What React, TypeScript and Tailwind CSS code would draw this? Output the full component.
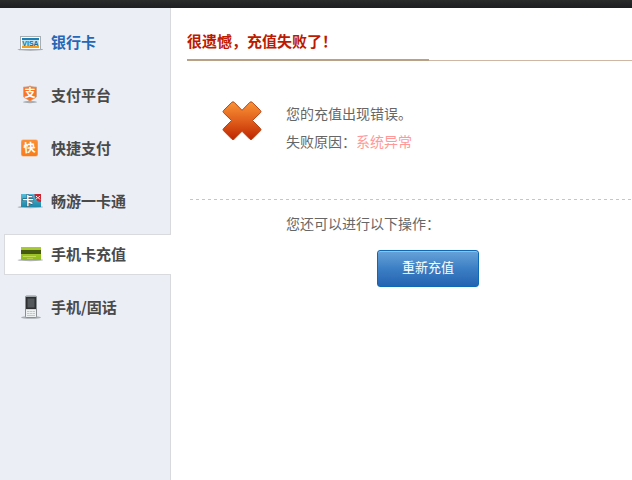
import clsx from "clsx";
import type { ReactNode } from "react";

const IconFrame = ({ children }: { children: ReactNode }) => (
  <svg
    className="shrink-0"
    width="26"
    height="29"
    viewBox="0 0 26 29"
    aria-hidden="true"
  >
    {children}
  </svg>
);

const BankCardIcon = () => (
  <IconFrame>
    <ellipse cx="13.5" cy="21.5" rx="13" ry="1.2" fill="#8b9299" opacity=".75" />
    <rect x="3.5" y="8.5" width="20" height="13" fill="#fff" stroke="#a8adb3" />
    <rect x="5" y="10" width="17" height="2" fill="#1f7fb0" />
    <rect x="5" y="12" width="17" height="6" fill="#c5e4f2" />
    <text
      x="13.5"
      y="17.8"
      textAnchor="middle"
      fontFamily="Liberation Sans, sans-serif"
      fontSize="7"
      fontWeight="bold"
      fill="#14709f"
    >
      VISA
    </text>
    <rect x="5" y="18" width="17" height="2" fill="#f5a01d" />
  </IconFrame>
);

const PlatformIcon = () => (
  <IconFrame>
    <ellipse cx="13" cy="21" rx="7" ry="1.2" fill="#8b9299" opacity=".7" />
    <path
      d="M6.5 6C9 6.2 11 5.8 13 5C15 5.8 17 6.2 19.5 6V15.5C19.500 17 15.500 17.500 13 20.500C10.500 17.500 6.500 17 6.500 15.500Z"
      fill="#fb7422"
      stroke="#c0a99c"
      strokeWidth=".8"
    />
    <text
      x="13"
      y="15.5"
      textAnchor="middle"
      fontFamily="Noto Sans CJK SC, sans-serif"
      fontSize="11"
      fontWeight="bold"
      fill="#fff"
    >
      支
    </text>
  </IconFrame>
);

const QuickPayIcon = () => (
  <IconFrame>
    <defs>
      <linearGradient id="quick" x1="0" y1="0" x2="0" y2="1">
        <stop offset="0" stopColor="#fb8f35" />
        <stop offset="1" stopColor="#f97b1a" />
      </linearGradient>
    </defs>
    <rect x="4" y="5.5" width="17" height="17" rx="2" fill="#f6b27c" />
    <rect x="4.5" y="6" width="16" height="16" rx="2" fill="url(#quick)" />
    <text
      x="12.5"
      y="18.2"
      textAnchor="middle"
      fontFamily="Noto Sans CJK SC, sans-serif"
      fontSize="12"
      fontWeight="bold"
      fill="#fff"
      transform="rotate(-4 12.5 14)"
    >
      快
    </text>
  </IconFrame>
);

const GameCardIcon = () => (
  <IconFrame>
    <defs>
      <linearGradient id="game" x1="0" y1="0" x2="0" y2="1">
        <stop offset="0" stopColor="#52bedb" />
        <stop offset="1" stopColor="#1e86a6" />
      </linearGradient>
    </defs>
    <ellipse cx="13.5" cy="20" rx="13" ry="1.2" fill="#8b9299" opacity=".7" />
    <rect x="4" y="7" width="20" height="13" fill="url(#game)" />
    <path d="M17.5 7H24V15C20 15 17.5 12 17.5 7Z" fill="#c92632" />
    <path
      d="M19 9L20.5 10.7L19 12.4M22.8 9L21.3 10.7L22.8 12.4"
      fill="none"
      stroke="#fff"
      strokeWidth="1"
    />
    <text
      x="11"
      y="17.8"
      textAnchor="middle"
      fontFamily="Noto Sans CJK SC, sans-serif"
      fontSize="11"
      fontWeight="bold"
      fill="#fff"
      stroke="#14506b"
      strokeWidth="1"
      paintOrder="stroke"
    >
      卡
    </text>
  </IconFrame>
);

const MobileCardIcon = () => (
  <IconFrame>
    <defs>
      <linearGradient id="mobile" x1="0" y1="0" x2="0" y2="1">
        <stop offset="0" stopColor="#a9cb32" />
        <stop offset="1" stopColor="#8fbc1c" />
      </linearGradient>
    </defs>
    <ellipse cx="13.5" cy="20" rx="13" ry="1.2" fill="#8b9299" opacity=".7" />
    <rect x="4" y="7" width="20" height="13" fill="url(#mobile)" />
    <rect x="4" y="10" width="20" height="4" fill="#465912" />
    <rect x="6" y="16" width="13" height="1" fill="#c2db55" />
    <rect x="10" y="18" width="6" height="1" fill="#b2d043" />
  </IconFrame>
);

const PhoneIcon = () => (
  <IconFrame>
    <ellipse cx="14" cy="24.5" rx="10" ry="1.3" fill="#8b9299" opacity=".7" />
    <rect x="8.5" y="3" width="11" height="21.5" rx="1" fill="#b9bec2" stroke="#8a8f93" />
    <rect x="9" y="4" width="10" height="12" fill="#2d2f31" />
    <rect x="10.5" y="5.5" width="7" height="9" fill="#55585b" />
    <rect x="9" y="16.5" width="10" height="7.5" fill="#eef1f2" />
    <path
      d="M10 18.500H12.500M13 18.500H15M15.500 18.500H18M10 20.500H12.500M13 20.500H15M15.500 20.500H18M10 22.500H18"
      stroke="#b4ccd7"
      strokeWidth="1"
    />
  </IconFrame>
);

const ErrorIcon = () => (
  <svg
    className="shrink-0"
    width="40"
    height="41"
    viewBox="0 -1 40 41"
    role="img"
    aria-label="错误"
  >
    <defs>
      <linearGradient id="error" x1="0" y1="0" x2="0" y2="1">
        <stop offset="0" stopColor="#fa9436" />
        <stop offset=".5" stopColor="#e05f1c" />
        <stop offset="1" stopColor="#bf2500" />
      </linearGradient>
    </defs>
    <path
      d="M9.8 1.3Q11 .3 12.200 1.300L20 9.300L27.800 1.300Q29 .3 30.200 1.300L38.500 9.500Q39.500 10.600 38.500 11.700L30.500 19.500L38.500 27.500Q39.500 28.600 38.500 29.700L30.200 38.100Q29 39.200 27.800 38.100L20 30.300L12.200 38.100Q11 39.200 9.800 38.100L1.500 29.700Q.5 28.600 1.500 27.500L9.500 19.500L1.500 11.700Q.5 10.600 1.500 9.500Z"
      fill="url(#error)"
      stroke="#b5481a"
      strokeWidth="1"
    />
  </svg>
);

interface Channel {
  title: string;
  href: string;
  icon: ReactNode;
  highlighted?: boolean;
  current?: boolean;
}

const channels: Channel[] = [
  { title: "银行卡", href: "#bank", icon: <BankCardIcon />, highlighted: true },
  { title: "支付平台", href: "#platform", icon: <PlatformIcon /> },
  { title: "快捷支付", href: "#quick", icon: <QuickPayIcon /> },
  { title: "畅游一卡通", href: "#game-card", icon: <GameCardIcon /> },
  {
    title: "手机卡充值",
    href: "#mobile-card",
    icon: <MobileCardIcon />,
    current: true,
  },
  { title: "手机/固话", href: "#phone", icon: <PhoneIcon /> },
];

const ChannelLink = ({ title, href, icon, highlighted, current }: Channel) => (
  <a
    href={href}
    aria-current={current ? "page" : undefined}
    className={clsx(
      "flex h-[41px] items-center gap-2 border border-r-0 pl-3 text-[15px] font-bold",
      current ? "border-[#d9dadd] bg-white" : "border-transparent",
      highlighted ? "text-[#2467b8]" : "text-[#4a4a4a]"
    )}
  >
    {icon}
    {title}
  </a>
);

const Sidebar = () => (
  <nav className="w-[171px] shrink-0 bg-[#ebeef4] pt-3.5 font-['Noto_Sans_CJK_SC',sans-serif] shadow-[inset_-1px_0_0_#d7d9dd]">
    <ul className="flex flex-col gap-3 pl-1">
      {channels.map((channel) => (
        <li key={channel.href}>
          <ChannelLink {...channel} />
        </li>
      ))}
    </ul>
  </nav>
);

const Result = () => (
  <main className="min-w-0 flex-1 pl-4 text-sm text-[#666]">
    <div className="flex items-end border-b border-[#ceb8a4] pt-5">
      <h1 className="-mb-px w-[242px] border-b-2 border-[#b9a186] pb-[5px] font-['Noto_Sans_CJK_SC',sans-serif] text-[15px] leading-[26px] font-bold text-[#bd1a00]">
        很遗憾，充值失败了！
      </h1>
    </div>
    <section className="ml-[35px] flex gap-6 pt-[39px] pb-[43px]">
      <ErrorIcon />
      <div className="leading-7">
        <p>您的充值出现错误。</p>
        <p>
          失败原因：<span className="text-[#ff9999]">系统异常</span>
        </p>
      </div>
    </section>
    <svg className="block h-px w-full pl-[3px]" aria-hidden="true">
      <line
        x1="0"
        y1="0.5"
        x2="100%"
        y2="0.5"
        stroke="#c6c6c6"
        strokeDasharray="3 3"
      />
    </svg>
    <section className="flex flex-col items-start gap-3 pt-[10px] pl-[99px]">
      <p className="leading-7">您还可以进行以下操作：</p>
      <button
        type="button"
        className="ml-[91px] h-[37px] w-[102px] cursor-pointer rounded-[3px] border border-[#0c69b7] bg-linear-to-b from-[#67a3d8] from-0% via-[#3c7fc5] via-50% to-[#2563b1] pb-0.5 font-['Noto_Sans_CJK_SC',sans-serif] text-[13px] text-white shadow-[inset_0_1px_0_#88c5f2]"
      >
        重新充值
      </button>
    </section>
  </main>
);

export default function App() {
  return (
    <div className="flex min-h-screen flex-col bg-white font-['Liberation_Sans','Noto_Sans_CJK_SC',sans-serif]">
      <header className="h-2 bg-linear-to-b from-[#2a2b2b] to-[#1d1e1f]" />
      <div className="flex flex-1">
        <Sidebar />
        <Result />
      </div>
    </div>
  );
}
